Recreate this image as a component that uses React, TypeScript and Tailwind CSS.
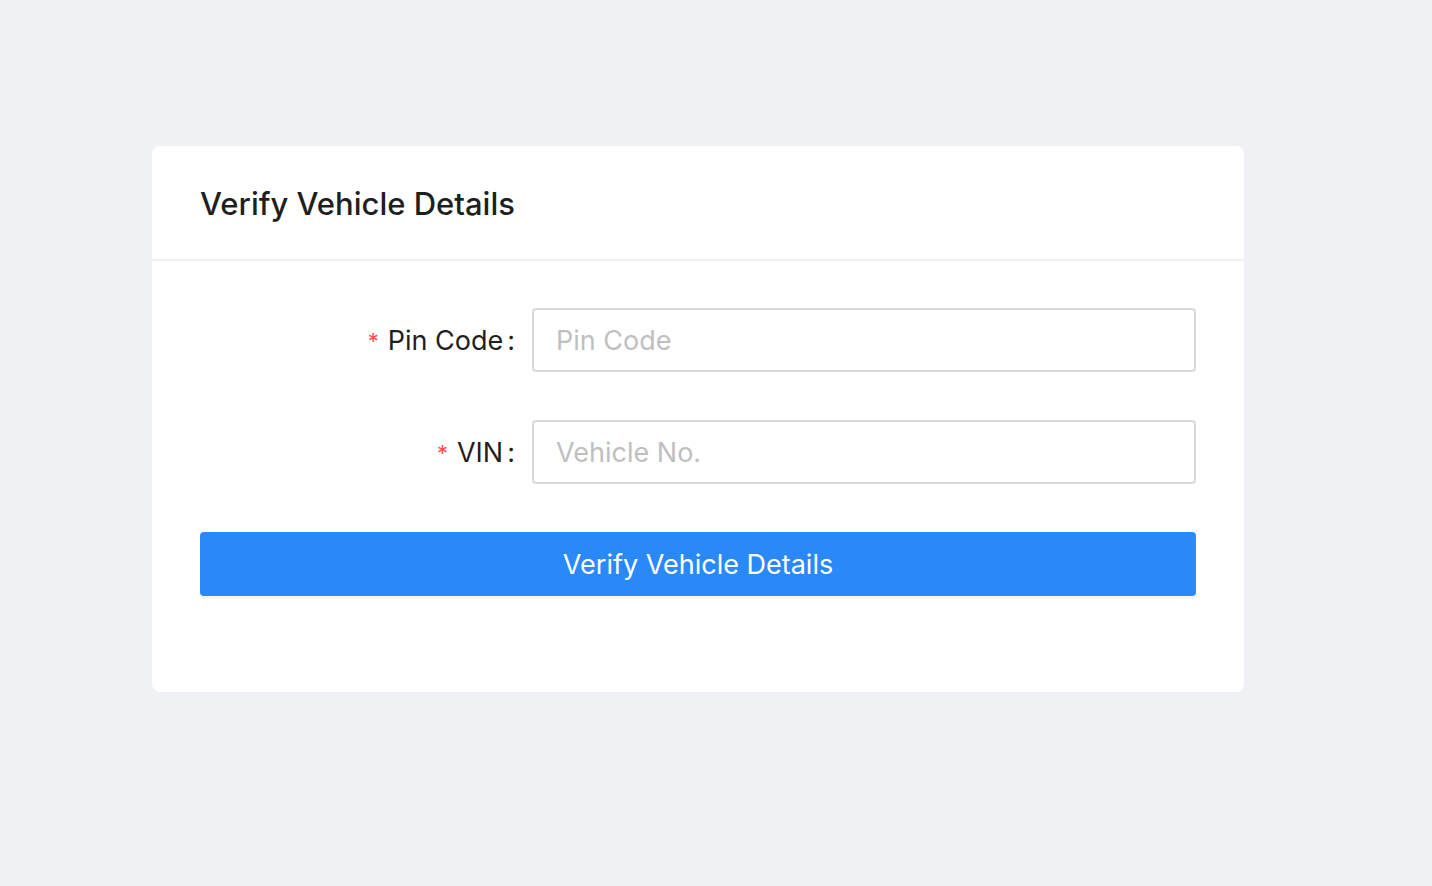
import { useState } from 'react';

function FormRow({ label, placeholder, value, onChange }: { label: string; placeholder: string; value: string; onChange: (v: string) => void }) {
  return (
    <div className="flex items-center">
      <label className="flex w-[332px] shrink-0 items-center justify-end pt-[2px] pr-[17px] text-[27px] text-[#1f1f1f]">
        <span className="mr-[9px] text-[22px] leading-none text-[#ff4d4f]">*</span>
        <span>{label}</span>
        <span className="ml-[4px]">:</span>
      </label>
      <input
        value={value}
        onChange={(event) => onChange(event.target.value)}
        placeholder={placeholder}
        className="h-[64px] flex-1 rounded-[4px] border-2 border-[#d9d9d9] bg-white px-[22px] text-[27px] text-[#1f1f1f] outline-none placeholder:text-[#bfbfbf] focus:border-[#2a89f8]"
      />
    </div>
  );
}

export default function App() {
  const [pinCode, setPinCode] = useState('');
  const [vin, setVin] = useState('');

  return (
    <div className="min-h-screen bg-[#eff1f5] pt-[146px] pl-[152px] font-['Inter','Noto_Sans',sans-serif]">
      <div className="w-[1092px] rounded-[8px] bg-white">
        <div className="flex h-[115px] items-center border-b-2 border-[#f0f0f0] px-[48px] pt-[3px]">
          <h1 className="text-[31px] font-medium text-[#1f1f1f]">Verify Vehicle Details</h1>
        </div>
        <div className="flex flex-col gap-[48px] px-[48px] pt-[47px] pb-[96px]">
          <FormRow label="Pin Code" placeholder="Pin Code" value={pinCode} onChange={setPinCode} />
          <FormRow label="VIN" placeholder="Vehicle No." value={vin} onChange={setVin} />
          <button
            type="button"
            className="h-[64px] w-full rounded-[4px] bg-[#2a89f8] pt-[2px] text-[27px] text-white shadow-[0_3px_0_rgba(0,0,0,0.04)]"
          >
            Verify Vehicle Details
          </button>
        </div>
      </div>
    </div>
  );
}
